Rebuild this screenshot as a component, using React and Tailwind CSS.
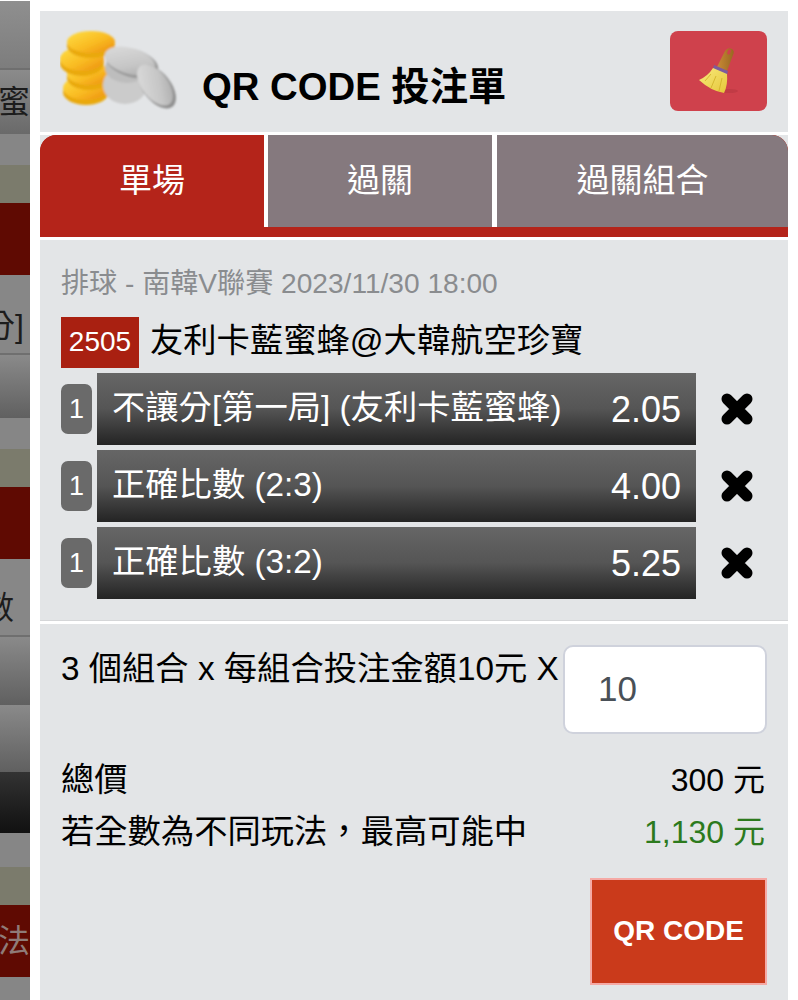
import React from "react";

const FONT = { fontFamily: '"Liberation Sans","Noto Sans CJK TC",sans-serif' };

function Coins() {
  const gold = [
    [26, 60, 23, 13],
    [29, 46, 22, 12],
    [22, 31, 22, 13],
    [31, 14, 24, 12],
  ];
  return (
    <svg width="124" height="84" viewBox="0 0 124 84" className="shrink-0">
      <defs>
        <linearGradient id="g1" x1="0" y1="0" x2="1" y2="1">
          <stop offset="0" stopColor="#ffdf45" />
          <stop offset="0.55" stopColor="#f9bb22" />
          <stop offset="1" stopColor="#ec8c0e" />
        </linearGradient>
        <linearGradient id="s1" x1="0" y1="0" x2="1" y2="1">
          <stop offset="0" stopColor="#dedede" />
          <stop offset="0.6" stopColor="#c6c6c6" />
          <stop offset="1" stopColor="#a5a5a5" />
        </linearGradient>
        <filter id="soft"><feGaussianBlur stdDeviation="1" /></filter>
      </defs>
      <g filter="url(#soft)">
        {gold.map(([cx, cy, rx, ry], i) => (
          <g key={i}>
            <ellipse cx={cx} cy={cy + 4} rx={rx} ry={ry} fill="#e9a90f" />
            <ellipse cx={cx} cy={cy} rx={rx} ry={ry - 1} fill="url(#g1)" />
          </g>
        ))}
        <ellipse cx="65" cy="57" rx="22" ry="19" fill="#cbcbcb" />
        <ellipse cx="67" cy="40" rx="22" ry="15" fill="#bdbdbd" />
        <ellipse cx="72" cy="35" rx="27" ry="14" transform="rotate(16 72 35)" fill="#979797" />
        <ellipse cx="70" cy="33" rx="26" ry="13" transform="rotate(16 70 33)" fill="url(#s1)" />
        <ellipse cx="97" cy="59" rx="14" ry="25" transform="rotate(-38 97 59)" fill="#8f8f8f" />
        <ellipse cx="95" cy="57" rx="13" ry="24" transform="rotate(-38 95 57)" fill="url(#s1)" />
      </g>
    </svg>
  );
}

function Broom() {
  return (
    <svg width="40" height="48" viewBox="0 0 40 48">
      <defs>
        <linearGradient id="b1" x1="0" y1="0" x2="1" y2="1">
          <stop offset="0" stopColor="#f8ea7c" />
          <stop offset="1" stopColor="#e6c639" />
        </linearGradient>
        <linearGradient id="h1" x1="0" y1="0" x2="1" y2="0">
          <stop offset="0" stopColor="#c98a35" />
          <stop offset="1" stopColor="#9a6722" />
        </linearGradient>
      </defs>
      <ellipse cx="30" cy="44" rx="9" ry="2" fill="#a5303a" opacity="0.35" />
      <path d="M18 20 L26 4 Q29 0 33 2 Q36 4 34 8 L28 24 Z" fill="url(#h1)" />
      <ellipse cx="30" cy="5" rx="1.5" ry="2.8" transform="rotate(25 30 5)" fill="#cf414c" />
      <path d="M15 18 L29 24 L28 28 L14 22 Z" fill="#7c5c9c" />
      <path d="M14 21 L28 27 Q29 38 25 46 Q12 44 0 33 Q9 29 14 21 Z" fill="url(#b1)" />
      <path d="M12 27 L6 34 M17 29 L12 41 M23 31 L20 44" stroke="#cfad25" strokeWidth="0.8" fill="none" />
    </svg>
  );
}

function Close() {
  return (
    <svg width="34" height="34" viewBox="0 0 34 34" className="blur-[0.5px]">
      <path d="M7 7 L27 27 M27 7 L7 27" stroke="#000" strokeWidth="11" strokeLinecap="round" />
    </svg>
  );
}

function Bet({ name, odds }) {
  return (
    <div className="flex items-center h-[72px]">
      <div className="w-[31px] h-[50px] rounded-[7px] bg-[#6a6a6a] text-white text-[27px] flex items-center justify-center shrink-0">1</div>
      <div className="ml-[5px] w-[599px] h-[72px] flex items-center justify-between pl-[15px] pr-[15px] text-white text-[33.3px] bg-gradient-to-b from-[#666666] via-[#555555] to-[#242424]">
        <span className="-mt-[3px] whitespace-nowrap">{name}</span>
        <span className="text-[36px] mt-[1px]">{odds}</span>
      </div>
      <div className="ml-[24px]"><Close /></div>
    </div>
  );
}

const strip = [
  ["h-[67px] mt-[1px] bg-gradient-to-b from-[#8f8f8f] to-[#7d7d7d]", "", ""],
  ["h-[66px] border-t-2 border-[#6f6f6f] bg-gradient-to-b from-[#8b8b8b] to-[#6a6a6a]", "蜜", "text-[#1c1c1c]"],
  ["h-[31px] bg-[#868686]", "", ""],
  ["h-[38px] bg-[#7b7b6c]", "", ""],
  ["h-[72px] bg-[#5f0a02]", "", ""],
  ["h-[80px] border-b-2 border-[#6f6f6f] bg-[#878787] pt-[24px] pr-[6px]", "分]", "text-[#1c1c1c]"],
  ["h-[63px] bg-gradient-to-b from-[#8a8a8a] to-[#606060]", "", ""],
  ["h-[31px] bg-[#868686]", "", ""],
  ["h-[38px] bg-[#7b7b6c]", "", ""],
  ["h-[72px] bg-[#5f0a02]", "", ""],
  ["h-[78px] border-b-2 border-[#6f6f6f] bg-[#878787] pt-[22px] pr-[16px]", "數", "text-[#1c1c1c]"],
  ["h-[68px] bg-gradient-to-b from-[#8a8a8a] to-[#606060]", "", ""],
  ["h-[67px] bg-gradient-to-b from-[#8a8a8a] to-[#606060]", "", ""],
  ["h-[61px] bg-gradient-to-b from-[#333333] to-[#111111]", "", ""],
  ["h-[34px] bg-[#868686]", "", ""],
  ["h-[38px] bg-[#7b7b6c]", "", ""],
  ["h-[72px] bg-[#5f0a02]", "法", "text-[#8f7b78]"],
  ["h-[23px] bg-[#868686]", "", ""],
];

export default function App() {
  return (
    <div className="w-[798px] h-[1000px] bg-white flex overflow-hidden" style={FONT}>
      <div className="w-[30px] shrink-0 overflow-hidden flex flex-col">
        {strip.map(([cls, t, color], i) => (
          <div key={i} className={`${cls} ${color} shrink-0 flex items-center justify-end text-[32px] whitespace-nowrap`}>
            {t}
          </div>
        ))}
      </div>

      <div className="ml-[10px] mt-[11px] w-[748px] h-[989px] bg-[#e3e5e7] flex flex-col">
        <div className="h-[121px] flex items-center pl-[20px] pr-[21px] shrink-0">
          <div className="-mt-[3px]"><Coins /></div>
          <div className="ml-[18px] font-bold text-[38.3px] text-black flex-1 mt-[30px] whitespace-nowrap">QR CODE 投注單</div>
          <div className="w-[97px] h-[80px] rounded-[8px] bg-[#cf414c] flex items-center justify-center -mt-[2px]"><Broom /></div>
        </div>

        <div className="h-[3px] bg-white shrink-0" />
        <div className="bg-[#b4241a] rounded-t-[16px] h-[102px] shrink-0 overflow-hidden">
          <div className="flex h-[92px] text-white text-[33px] rounded-t-[16px] overflow-hidden">
            <div className="w-[224px] flex items-center justify-center bg-[#b4241a]">單場</div>
            <div className="w-[4px] bg-white" />
            <div className="w-[224px] flex items-center justify-center bg-[#85797e]">過關</div>
            <div className="w-[5px] bg-white" />
            <div className="flex-1 flex items-center justify-center bg-[#85797e]">過關組合</div>
          </div>
        </div>
        <div className="h-[3px] bg-white shrink-0" />

        <div className="px-[21px] pt-[26px] shrink-0 h-[380px] flex flex-col">
          <div className="text-[28.1px] leading-[36px] text-[#8a8c8f] whitespace-nowrap">排球 - 南韓V聯賽 2023/11/30 18:00</div>
          <div className="flex items-center mt-[15px] h-[50px]">
            <div className="w-[78px] h-[51px] bg-[#a92011] text-white text-[28px] flex items-center justify-center">2505</div>
            <div className="ml-[11px] text-[33.3px] text-black whitespace-nowrap -mt-[2px]">友利卡藍蜜蜂@大韓航空珍寶</div>
          </div>
          <div className="mt-[6px] flex flex-col gap-[5px]">
            <Bet name="不讓分[第一局] (友利卡藍蜜蜂)" odds="2.05" />
            <Bet name="正確比數 (2:3)" odds="4.00" />
            <Bet name="正確比數 (3:2)" odds="5.25" />
          </div>
        </div>
        <div className="h-[4px] bg-white border-t border-[#d5d6d8] shrink-0" />

        <div className="px-[21px] flex-1 text-black">
          <div className="flex items-start pt-[21px]">
            <div className="text-[33.3px] leading-[48px] whitespace-nowrap w-[502px]">3 個組合 x 每組合投注金額10元 X</div>
            <div className="w-[204px] h-[89px] bg-white rounded-[10px] border-2 border-[#cfd2dc] flex items-center pl-[33px] text-[35px] text-[#495057]">10</div>
          </div>
          <div className="flex justify-between items-center h-[50px] mt-[21px] pr-[2px]">
            <span className="text-[33.3px]">總價</span><span className="text-[32px]">300 元</span>
          </div>
          <div className="flex justify-between items-center h-[50px] mt-[2px] pr-[2px]">
            <span className="text-[33.3px]">若全數為不同玩法，最高可能中</span><span className="text-[32px] text-[#2c7a1d]">1,130 元</span>
          </div>
          <div className="flex justify-end mt-[21px]">
            <div className="w-[177px] h-[107px] bg-[#ca3a1b] border-2 border-[#f5a9a5] text-white font-bold text-[28px] flex items-center justify-center pb-[2px]">QR CODE</div>
          </div>
        </div>
      </div>
    </div>
  );
}
